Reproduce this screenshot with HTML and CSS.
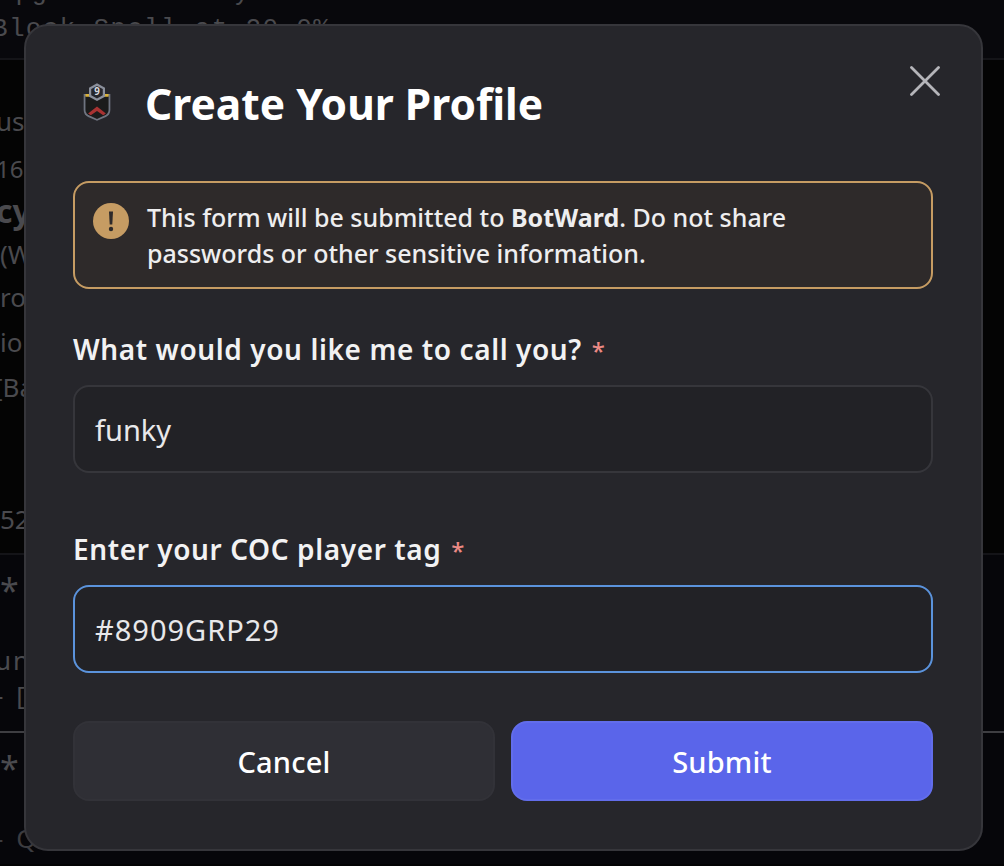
FILE: index.html
```html
<!DOCTYPE html>
<html lang="en">
<head>
<meta charset="utf-8">
<title>Create Your Profile</title>
<link rel="stylesheet" href="styles.css">
</head>
<body>
<div class="backdrop">
  <div class="top-block">
    <div class="code code-a">Upgrade Priority</div>
    <div class="code code-b">Block Spell at 20.0%</div>
  </div>
  <div class="msg">
    <div class="line l-use">user</div>
    <div class="line l-time">16:52</div>
    <div class="line l-name">cyber</div>
    <div class="line l-v">(War)</div>
    <div class="line l-ro">ro</div>
    <div class="line l-io">io</div>
    <div class="line l-b">[Base]</div>
    <div class="line l-52">52</div>
  </div>
  <div class="sect sect-a">
    <div class="line l-star">*</div>
    <div class="line l-unt">unt</div>
    <div class="line l-dash">- [</div>
  </div>
  <div class="sect sect-b">
    <div class="line l-star">*</div>
    <div class="line l-q">- Q</div>
  </div>
</div>

<div class="modal">
  <header class="head">
    <svg class="logo" viewBox="0 0 36 44" width="32" height="40" aria-hidden="true">
      <path d="M3 13h30v18c0 4-2 6-5 8l-10 4-10-4c-3-2-5-4-5-8z" fill="#6f7480"/>
      <path d="M5 15h26v16c0 3-2 5-4 6l-9 4-9-4c-2-1-4-3-4-6z" fill="#1b1b1b"/>
      <path d="M5 13h6l2 3H5zM31 13h-6l-2 3h8z" fill="#d9b13a"/>
      <path d="M8 35l10-8 10 8-3 2-7-5-7 5z" fill="#a83232"/>
      <path d="M18 1l9 5v10l-9 5-9-5V6z" fill="#8b909c"/>
      <path d="M18 4l6.500 3.500v7L18 18l-6.500-3.500v-7z" fill="#26262b"/>
      <text x="18" y="14.500" class="logo-num">9</text>
    </svg>
    <h1 class="title">Create Your Profile</h1>
    <button class="close" aria-label="Close">
      <svg viewBox="0 0 30 30" width="30" height="30"><path d="M1.500 1.500l27 27M28.500 1.500l-27 27" stroke="#b5b5ba" stroke-width="2.800" stroke-linecap="round" fill="none"/></svg>
    </button>
  </header>

  <div class="notice">
    <svg class="notice-icon" viewBox="0 0 36 36" width="36" height="36" aria-hidden="true">
      <circle cx="18" cy="18" r="18" fill="#c69c63"/>
      <path d="M16 8.500h4l-.7 13h-2.600z" fill="#2e2a2a"/>
      <circle cx="18" cy="26" r="2.200" fill="#2e2a2a"/>
    </svg>
    <p class="notice-text">This form will be submitted to <b>BotWard</b>. Do not share passwords or other sensitive information.</p>
  </div>

  <div class="fields">
    <div class="field">
      <label class="label">What would you like me to call you? <span class="req">*</span></label>
      <div class="input">funky</div>
    </div>
    <div class="field">
      <label class="label">Enter your COC player tag <span class="req">*</span></label>
      <div class="input focus">#8909GRP29</div>
    </div>
  </div>

  <div class="actions">
    <button class="btn cancel">Cancel</button>
    <button class="btn submit">Submit</button>
  </div>
</div>
</body>
</html>
```
FILE: styles.css
```css
* { box-sizing: border-box; }
html, body { margin: 0; height: 100%; }
body {
  width: 1004px;
  height: 866px;
  overflow: hidden;
  background: #030304;
  font-family: "Noto Sans", sans-serif;
  position: relative;
}

.backdrop { height: 866px; color: #4a4a4e; font-size: 26px; overflow: hidden; }
.top-block { height: 60px; background: #08080c; border-bottom: 2px solid #141418; overflow: hidden; }
.code { font-family: "Liberation Mono", monospace; font-size: 26px; line-height: 30px; white-space: nowrap; }
.code-a { margin-top: -22px; }
.code-b { margin-left: -8px; margin-top: 6px; letter-spacing: 1.300px; }
.msg { height: 495px; padding-top: 41px; background: #040404; border-bottom: 2px solid #141418; }
.line { line-height: 40px; height: 40px; white-space: nowrap; }
.l-use { margin-left: -4px; }
.l-time { margin-top: 8px; font-size: 24px; margin-left: -4px; }
.l-name { margin-top: 2px; margin-left: -4px; font-weight: 700; font-size: 32px; }
.l-v { margin-top: 3px; }
.l-ro { margin-top: 3px; }
.l-io { margin-top: 5px; }
.l-b { margin-top: 5px; margin-left: -6px; }
.l-52 { margin-top: 92px; }
.sect-a { height: 178px; padding-top: 15px; background: #06060a; border-bottom: 2px solid #3e3e42; }
.sect-b { padding-top: 15px; background: #06060a; height: 131px; }
.l-star { font-size: 34px; }
.l-unt { margin-top: 30px; margin-left: -5px; letter-spacing: 2px; }
.l-dash { margin-top: -5px; margin-left: -5px; word-spacing: 6px; }
.l-q { margin-top: 30px; margin-left: -5px; word-spacing: 6px; color: #3c3c40; }

.modal {
  position: absolute;
  left: 24px;
  top: 24px;
  width: 959px;
  height: 827px;
  background: #26262b;
  border: 2px solid #36363b;
  border-radius: 24px;
  padding: 0 48px 0 47px;
  display: flex;
  flex-direction: column;
}
.head { display: flex; align-items: center; height: 155px; }
.logo { margin-left: 8px; margin-right: 32px; flex: none; margin-top: -4px; }
.logo-num { font: 700 11px "Noto Sans", sans-serif; fill: #d8d8dc; text-anchor: middle; }
.title { margin: 0; font-size: 42.500px; font-weight: 700; color: #fff; line-height: 56px; }
.close {
  position: absolute; right: 41px; top: 40px;
  background: none; border: 0; padding: 0; width: 30px; height: 30px; display: block;
}
.close svg { display: block; }

.notice {
  height: 108px;
  display: flex;
  align-items: flex-start;
  gap: 18px;
  padding: 20px 18px 0 18px;
  background: #2e2a2a;
  border: 2px solid #c69c63;
  border-radius: 16px;
  margin-bottom: 40px;
}
.notice-icon { flex: none; }
.notice-text { margin: -4px 0 0; color: #eeeeef; font-size: 25px; line-height: 36px; font-weight: 500; }
.notice-text b { font-weight: 700; }

.fields { display: flex; flex-direction: column; gap: 56px; margin-bottom: 48px; }
.field { display: flex; flex-direction: column; }
.label { color: #f2f2f3; font-size: 28px; font-weight: 600; line-height: 40px; height: 40px; margin-bottom: 16px; letter-spacing: .6px; }
.req { color: #ec8a85; font-size: 24px; font-weight: 500; margin-left: 2px; }
.input {
  height: 88px;
  background: #222226;
  border: 2px solid #36363b;
  border-radius: 16px;
  color: #e8e8ea;
  font-size: 29px;
  padding-left: 20px;
  display: flex;
  align-items: center;
}
.input.focus { border-color: #5b93dc; letter-spacing: 1px; }

.actions { display: flex; gap: 16px; }
.btn {
  flex: 1;
  height: 80px;
  border-radius: 16px;
  font: 500 29px "Noto Sans", sans-serif;
  letter-spacing: .2px;
  color: #fff;
  border: 2px solid transparent;
}
.cancel { background: #2f2f35; border-color: #323238; }
.submit { background: #5a65ea; border-color: #626deb; }
```
